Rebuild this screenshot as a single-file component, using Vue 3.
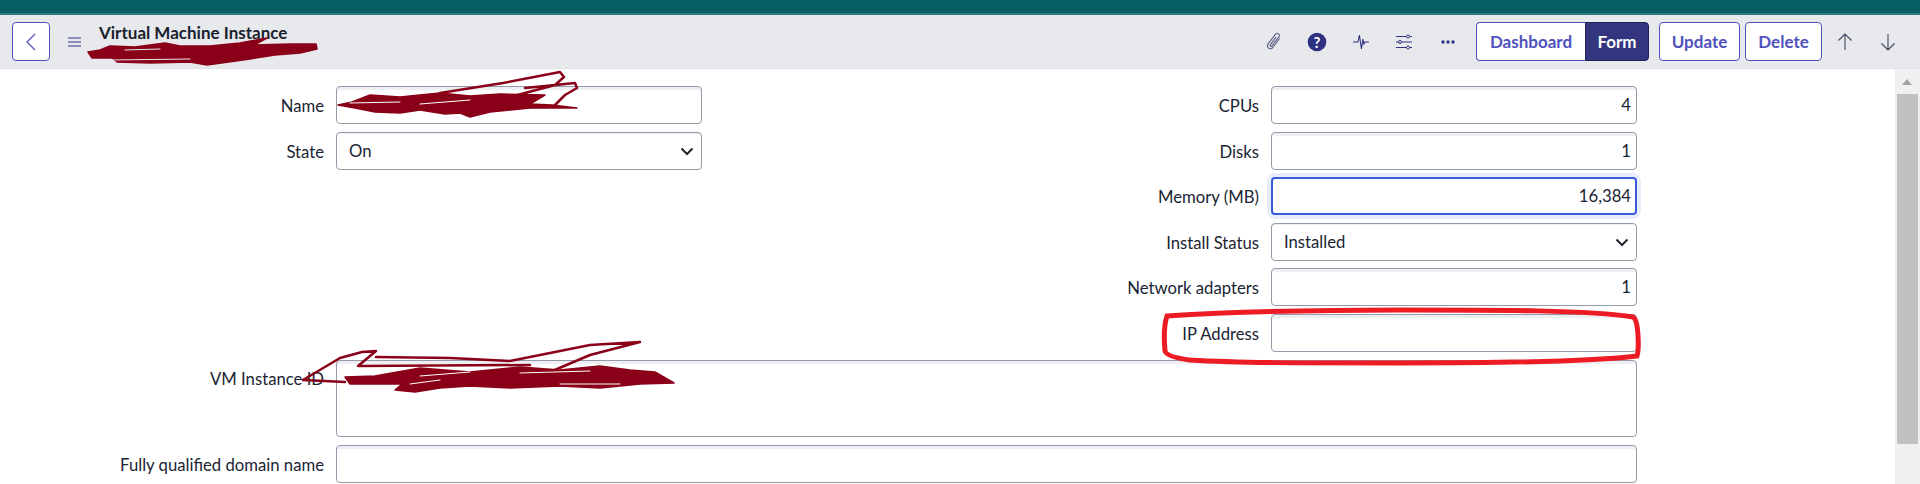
<script setup>
const leftRows = [
  { label: 'Name', value: '', type: 'input' },
  { label: 'State', value: 'On', type: 'select' },
]
const rightRows = [
  { label: 'CPUs', value: '4', type: 'input', num: true },
  { label: 'Disks', value: '1', type: 'input', num: true },
  { label: 'Memory (MB)', value: '16,384', type: 'input', num: true, focus: true },
  { label: 'Install Status', value: 'Installed', type: 'select' },
  { label: 'Network adapters', value: '1', type: 'input', num: true },
  { label: 'IP Address', value: '', type: 'input' },
]
</script>

<template>
  <div class="page">
    <div class="topbar"></div>
    <header class="head">
      <button class="btn back" aria-label="Back">
        <svg width="14" height="20" viewBox="0 0 14 20"><path d="M11 2 3 10l8 8" fill="none" stroke="#4f52bd" stroke-width="1.2"/></svg>
      </button>
      <svg class="burger" width="13" height="10" viewBox="0 0 13 10"><path d="M0 1h13M0 5h13M0 9h13" stroke="#2e3280" stroke-width="1.1"/></svg>
      <div class="title">Virtual Machine Instance</div>
      <div class="icons">
        <span class="cell"><svg width="20" height="22" viewBox="0 0 20 22"><path d="M15.5 7.5 8.3 17a3 3 0 0 1-4.6-3.6L11.6 3.2a2.1 2.1 0 0 1 3.3 2.6l-7 9.2a1 1 0 0 1-1.6-1.2l5.8-7.6" fill="none" stroke="#5b5f86" stroke-width="1.1"/></svg></span>
        <span class="cell"><svg width="20" height="20" viewBox="0 0 20 20"><circle cx="10" cy="10" r="9.3" fill="#2e3280"/><text x="10" y="15.5" text-anchor="middle" class="q">?</text></svg></span>
        <span class="cell"><svg width="18" height="20" viewBox="0 0 18 20"><path d="M1 10h5l1.4-7 2 14 1.5-10 1 5 1-2h4" fill="none" stroke="#2e3280" stroke-width="1.1"/></svg></span>
        <span class="cell"><svg width="18" height="18" viewBox="0 0 18 18"><g fill="none" stroke="#2e3280" stroke-width="1"><path d="M1 3.5h10.5M14.5 3.5H17M1 9h2.5M6.5 9H17M1 14.5h10.5M14.5 14.5H17"/><circle cx="13" cy="3.5" r="1.5"/><circle cx="5" cy="9" r="1.5"/><circle cx="13" cy="14.5" r="1.5"/></g></svg></span>
        <span class="cell"><svg width="16" height="6" viewBox="0 0 16 6"><g fill="#2e3280"><circle cx="3" cy="3" r="1.7"/><circle cx="8" cy="3" r="1.7"/><circle cx="13" cy="3" r="1.7"/></g></svg></span>
      </div>
      <div class="seg">
        <button class="btn segl">Dashboard</button>
        <button class="btn segr">Form</button>
      </div>
      <button class="btn update">Update</button>
      <button class="btn delete">Delete</button>
      <svg class="arrow up" width="16" height="20" viewBox="0 0 16 20"><path d="M8 18V2M1.5 8.5 8 2l6.5 6.5" fill="none" stroke="#3f4560" stroke-width="1.1"/></svg>
      <svg class="arrow down" width="16" height="20" viewBox="0 0 16 20"><path d="M8 2v16M1.5 11.5 8 18l6.5-6.5" fill="none" stroke="#3f4560" stroke-width="1.1"/></svg>
    </header>

    <main class="body">
      <div class="form">
        <div class="cols">
          <div class="col col-left">
            <div v-for="r in leftRows" :key="r.label" class="row">
              <label class="lab">{{ r.label }}</label>
              <div class="ctl" :class="{ sel: r.type === 'select' }">
                {{ r.value }}
                <svg v-if="r.type === 'select'" class="chev" width="14" height="9" viewBox="0 0 14 9"><path d="M1.5 1.5 7 7l5.5-5.5" fill="none" stroke="#20242f" stroke-width="2"/></svg>
              </div>
            </div>
          </div>
          <div class="col col-right">
            <div v-for="r in rightRows" :key="r.label" class="row">
              <label class="lab">{{ r.label }}</label>
              <div class="ctl" :class="{ num: r.num, focus: r.focus, sel: r.type === 'select' }">
                {{ r.value }}
                <svg v-if="r.type === 'select'" class="chev" width="14" height="9" viewBox="0 0 14 9"><path d="M1.5 1.5 7 7l5.5-5.5" fill="none" stroke="#20242f" stroke-width="2"/></svg>
              </div>
            </div>
          </div>
        </div>
        <div class="row full tall">
          <label class="lab">VM Instance ID</label>
          <div class="ctl area"></div>
        </div>
        <div class="row full">
          <label class="lab">Fully qualified domain name</label>
          <div class="ctl"></div>
        </div>
      </div>
      <aside class="scroll">
        <span class="tri"></span>
        <span class="thumb"></span>
      </aside>
    </main>

    <svg class="marks" width="1920" height="484" viewBox="0 0 1920 484">
      <g fill="#8a0018" stroke="#8a0018" stroke-width="1.5" stroke-linejoin="round">
        <path d="M88 52 100 50 110 46 135 47 165 43 180 46 210 46 240 43 267 38 254 45 290 44 316 44 317 49 300 53 275 55 250 59 207 65 190 62 150 63 117 62 112 58 92 58Z"/>
        <path d="M338 105 352 102 370 95 400 97 440 93 470 96 500 94 545 95 530 104 552 105 577 108 530 108 490 112 470 117 460 113 445 114 420 110 400 113 375 112 355 108Z"/>
        <path d="M345 377 375 376 420 368 470 372 520 367 560 370 600 366 630 370 655 372 674 383 640 384 600 388 560 386 510 388 470 386 440 388 415 392 395 390 402 384 350 384Z"/>
      </g>
      <g fill="none" stroke="#8a0018" stroke-width="2.5" stroke-linecap="round" stroke-linejoin="round">
        <path d="M440 93 503 83 560 72 564 77 555 85 510 97M525 88 575 83 577 88 565 95 555 105"/>
        <path d="M303 380 340 358 362 352 376 351 358 366 530 365M376 357 450 358 510 361 590 345 640 342 590 355 550 372M303 380 345 382"/>
      </g>
      <g fill="none" stroke-linecap="round">
        <path d="M112 60 190 59M125 50 160 49" stroke="#e8e9ed" stroke-width="1"/>
        <path d="M350 103 400 102M420 104 470 100" stroke="#fff" stroke-width="1"/>
        <path d="M420 376 470 372M520 373 590 371M560 384 620 384M410 384 440 380" stroke="#fff" stroke-width="1"/>
      </g>
      <path d="M1167 316C1230 312 1300 310 1400 310S1590 310 1633 317C1639 320 1639 350 1637 356 1590 362 1500 363 1400 363S1240 363 1190 360C1175 358 1166 355 1165 351 1164 340 1164 325 1167 316Z" fill="none" stroke="#ed1c24" stroke-width="5"/>
    </svg>
  </div>
</template>

<style>
html, body { margin: 0; overflow: hidden; background: #fff; }
</style>

<style scoped>
.page {
  position: relative;
  width: 1920px;
  height: 484px;
  overflow: hidden;
  font-family: Lato, "Liberation Sans", sans-serif;
  font-size: 16.7px;
  color: #1a2433;
}
.topbar {
  height: 13px;
  background: #065d63;
  border-bottom: 2px solid #2f7b80;
}
.head {
  height: 54px;
  box-sizing: border-box;
  background: #e8e9ed;
  border-bottom: 1px solid #e0e1e5;
  display: flex;
  align-items: center;
  padding-left: 12px;
}
.btn {
  height: 39px;
  box-sizing: border-box;
  border: 1px solid #4f52bd;
  border-radius: 4px;
  background: #fff;
  color: #4f52bd;
  font-family: inherit;
  font-size: 17px;
  font-weight: 700;
  padding: 0;
}
.back { width: 38px; display: flex; align-items: center; justify-content: center; }
.burger { margin-left: 18px; }
.title {
  margin-left: 18px;
  margin-bottom: 18px;
  font-weight: 700;
  font-size: 17px;
  color: #18212f;
  white-space: nowrap;
}
.icons {
  position: absolute;
  left: 1252px;
  top: 15px;
  height: 53px;
  display: flex;
  align-items: center;
}
.cell { width: 43.5px; display: flex; align-items: center; justify-content: center; }
.q { font: 700 15px Lato, sans-serif; fill: #fff; }
.seg { display: flex; position: absolute; left: 1476px; top: 22px; }
.segl { width: 109px; border-radius: 4px 0 0 4px; border-right: 0; }
.segr { width: 64px; border-radius: 0 4px 4px 0; background: #33357f; color: #fff; border-color: #1f2155; }
.update { position: absolute; left: 1659px; top: 22px; width: 81px; }
.delete { position: absolute; left: 1745px; top: 22px; width: 77px; }
.arrow { position: absolute; top: 32px; }
.up { left: 1837px; }
.down { left: 1880px; }

.body { display: flex; height: 415px; }
.form {
  width: 1895px;
  box-sizing: border-box;
  padding: 17px 0 0 0;
  display: flex;
  flex-direction: column;
  gap: 7.6px;
}
.cols { display: flex; }
.col { display: flex; flex-direction: column; gap: 7.6px; }
.col-left { width: 702px; }
.col-right { width: 935px; }
.row { display: flex; justify-content: flex-end; align-items: center; gap: 12px; height: 38px; }
.full { width: 1637px; }
.tall { height: 77.4px; align-items: flex-start; }
.tall .lab { padding-top: 9px; }
.lab { white-space: nowrap; padding-top: 2px; }
.ctl {
  position: relative;
  flex: none;
  width: 366px;
  height: 38px;
  box-sizing: border-box;
  border: 1px solid #959aa8;
  border-radius: 4px;
  background: #fff;
  box-shadow: inset 0 3px 0 #eeeff2;
  padding: 0 12px;
  display: flex;
  align-items: center;
}
.full .ctl { width: 1301px; height: 100%; }
.num { justify-content: flex-end; padding-right: 5px; }
.sel { box-shadow: inset 0 1px 0 #eeeff2; }
.focus {
  border: 2px solid #3c5bdc;
  box-shadow: 0 0 0 4px #e8edfc;
  padding-right: 4px;
}
.chev { position: absolute; right: 7px; top: 14px; }
.scroll {
  position: relative;
  width: 25px;
  background: #f0f0f0;
  flex: none;
}
.tri {
  position: absolute;
  left: 7px;
  top: 10px;
  width: 0;
  height: 0;
  border-left: 5.5px solid transparent;
  border-right: 5.5px solid transparent;
  border-bottom: 6px solid #a3a3a3;
}
.thumb {
  position: absolute;
  left: 2px;
  top: 25px;
  width: 21px;
  height: 350px;
  background: #c1c1c1;
}
.marks { position: absolute; left: 0; top: 0; pointer-events: none; }
</style>
